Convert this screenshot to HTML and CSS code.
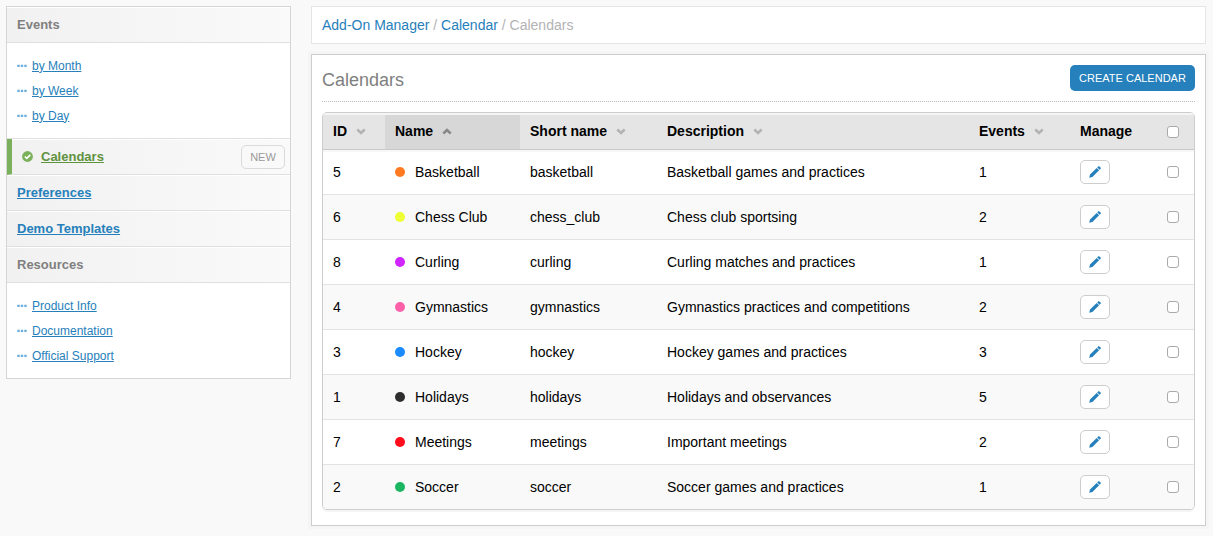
FILE: index.html
```html
<!DOCTYPE html>
<html lang="en">
<head>
<meta charset="utf-8">
<title>Calendars</title>
<link rel="stylesheet" href="styles.css">
</head>
<body>
<svg class="defs" aria-hidden="true">
  <symbol id="down" viewBox="0 0 10 7"><path d="M1.3 1.5 5 4.9 8.7 1.5" fill="none" stroke="currentColor" stroke-width="2.6"/></symbol>
  <symbol id="up" viewBox="0 0 10 7"><path d="M1.3 5.5 5 2.1 8.7 5.5" fill="none" stroke="currentColor" stroke-width="2.6"/></symbol>
  <symbol id="pencil" viewBox="0 0 12 12"><path d="M.2 11.8 1 8.6 7.7 1.9 10.1 4.3 3.4 11z M8.2 1.4 9.2.4q.6-.6 1.2 0l1.2 1.2q.6.6 0 1.2l-1 1z" fill="currentColor"/></symbol>
  <symbol id="dots" viewBox="0 0 10 4"><path d="M.3 .7h2.4v2.4H.3z M3.8 .7h2.4v2.4H3.8z M7.3 .7h2.4v2.4H7.3z" fill="currentColor"/></symbol>
</svg>
<div class="page">
  <nav class="sidebar">
    <h2 class="side-head">Events</h2>
    <ul class="side-list">
      <li><svg class="dots"><use href="#dots"/></svg><a href="#">by Month</a></li>
      <li><svg class="dots"><use href="#dots"/></svg><a href="#">by Week</a></li>
      <li><svg class="dots"><use href="#dots"/></svg><a href="#">by Day</a></li>
    </ul>
    <h2 class="side-head active">
      <svg class="check" viewBox="0 0 11 11"><circle cx="5.5" cy="5.5" r="5.4" fill="#7bb15c"/><path d="M2.8 5.5 4.8 7.4 8.3 3.9" fill="none" stroke="#fff" stroke-width="1.6"/></svg>
      <a href="#">Calendars</a><a class="new" href="#">NEW</a>
    </h2>
    <h2 class="side-head"><a href="#">Preferences</a></h2>
    <h2 class="side-head"><a href="#">Demo Templates</a></h2>
    <h2 class="side-head">Resources</h2>
    <ul class="side-list last">
      <li><svg class="dots"><use href="#dots"/></svg><a href="#">Product Info</a></li>
      <li><svg class="dots"><use href="#dots"/></svg><a href="#">Documentation</a></li>
      <li><svg class="dots"><use href="#dots"/></svg><a href="#">Official Support</a></li>
    </ul>
  </nav>
  <main class="main">
    <div class="crumbs"><a href="#">Add-On Manager</a> / <a href="#">Calendar</a> / Calendars</div>
    <section class="panel">
      <header class="panel-head"><h1>Calendars</h1><a class="create" href="#">CREATE CALENDAR</a></header>
      <div class="table">
        <div class="row head">
          <span>ID<svg class="sort"><use href="#down"/></svg></span>
          <span class="sorted">Name<svg class="sort"><use href="#up"/></svg></span>
          <span>Short name<svg class="sort"><use href="#down"/></svg></span>
          <span>Description<svg class="sort"><use href="#down"/></svg></span>
          <span>Events<svg class="sort"><use href="#down"/></svg></span>
          <span>Manage</span>
          <span class="pick"><input type="checkbox" class="box"></span>
        </div>
        <div class="row"><span>5</span><span><i class="dot orange"></i>Basketball</span><span>basketball</span><span>Basketball games and practices</span><span>1</span><span><a class="edit" href="#"><svg class="pencil"><use href="#pencil"/></svg></a></span><span class="pick"><input type="checkbox" class="box"></span></div>
        <div class="row"><span>6</span><span><i class="dot yellow"></i>Chess Club</span><span>chess_club</span><span>Chess club sportsing</span><span>2</span><span><a class="edit" href="#"><svg class="pencil"><use href="#pencil"/></svg></a></span><span class="pick"><input type="checkbox" class="box"></span></div>
        <div class="row"><span>8</span><span><i class="dot purple"></i>Curling</span><span>curling</span><span>Curling matches and practices</span><span>1</span><span><a class="edit" href="#"><svg class="pencil"><use href="#pencil"/></svg></a></span><span class="pick"><input type="checkbox" class="box"></span></div>
        <div class="row"><span>4</span><span><i class="dot pink"></i>Gymnastics</span><span>gymnastics</span><span>Gymnastics practices and competitions</span><span>2</span><span><a class="edit" href="#"><svg class="pencil"><use href="#pencil"/></svg></a></span><span class="pick"><input type="checkbox" class="box"></span></div>
        <div class="row"><span>3</span><span><i class="dot blue"></i>Hockey</span><span>hockey</span><span>Hockey games and practices</span><span>3</span><span><a class="edit" href="#"><svg class="pencil"><use href="#pencil"/></svg></a></span><span class="pick"><input type="checkbox" class="box"></span></div>
        <div class="row"><span>1</span><span><i class="dot black"></i>Holidays</span><span>holidays</span><span>Holidays and observances</span><span>5</span><span><a class="edit" href="#"><svg class="pencil"><use href="#pencil"/></svg></a></span><span class="pick"><input type="checkbox" class="box"></span></div>
        <div class="row"><span>7</span><span><i class="dot red"></i>Meetings</span><span>meetings</span><span>Important meetings</span><span>2</span><span><a class="edit" href="#"><svg class="pencil"><use href="#pencil"/></svg></a></span><span class="pick"><input type="checkbox" class="box"></span></div>
        <div class="row"><span>2</span><span><i class="dot green"></i>Soccer</span><span>soccer</span><span>Soccer games and practices</span><span>1</span><span><a class="edit" href="#"><svg class="pencil"><use href="#pencil"/></svg></a></span><span class="pick"><input type="checkbox" class="box"></span></div>
      </div>
    </section>
  </main>
</div>
</body>
</html>
```

FILE: styles.css
```css
* { box-sizing: border-box; }
body {
  margin: 0;
  height: 536px;
  overflow: hidden;
  background: #f9f9f9;
  font: 14px "Liberation Sans", Arial, sans-serif;
  color: #000;
}
a { color: #2680bb; }
.defs { display: none; }
.page { display: flex; align-items: flex-start; gap: 20px; padding: 6px 7px 0 6px; }

.sidebar { width: 285px; border: 1px solid #d5d5d5; background: #fff; }
.side-head {
  display: flex;
  align-items: center;
  height: 36px;
  margin: 0;
  padding: 0 5px 0 10px;
  border-bottom: 1px solid #dfdfdf;
  box-shadow: inset 0 1px #fff;
  background: linear-gradient(to right, #f1f1f1, #fafafa);
  color: #808080;
  font-size: 13px;
  font-weight: bold;
}
.side-head.active { padding-left: 10px; border-left: 5px solid #7bb15c; }
.active a { color: #5f923f; }
.check { width: 11px; height: 11px; margin-right: 8px; }
.side-head .new {
  margin-left: auto;
  width: 44px;
  height: 24px;
  border: 1px solid #dadada;
  border-radius: 5px;
  color: #999;
  font-size: 11px;
  font-weight: normal;
  line-height: 23px;
  text-align: center;
  text-decoration: none;
}
.side-list {
  list-style: none;
  height: 96px;
  margin: 0;
  padding: 10px 10px 0;
  border-bottom: 1px solid #dfdfdf;
  font-size: 12px;
}
.side-list.last { height: 95px; border: 0; }
.side-list li { display: flex; align-items: center; height: 25px; }
.side-list a, .side-head a { text-underline-offset: 1px; }
.dots { width: 10px; height: 4px; margin-right: 5px; color: #6aaedd; }

.main { flex: 1; }
.crumbs {
  height: 38px;
  margin-bottom: 10px;
  padding-left: 10px;
  border: 1px solid #e5e5e5;
  background: #fff;
  color: #b3b3b3;
  line-height: 37px;
}
.crumbs a { text-decoration: none; }
.panel {
  height: 472px;
  padding: 10px;
  border: 1px solid #cdcdcd;
  box-shadow: 0 0 0 3px #f5f5f5;
  background: #fff;
}
.panel-head {
  display: flex;
  justify-content: space-between;
  height: 37px;
  margin-bottom: 10px;
  border-bottom: 1px dotted #bbb;
}
h1 { margin: 0; color: #808080; font-size: 18px; font-weight: normal; line-height: 30px; }
.create {
  width: 125px;
  height: 26px;
  border-radius: 5px;
  background: #2680bb;
  color: #fff;
  font-size: 11px;
  line-height: 26px;
  text-align: center;
  text-decoration: none;
}

.table {
  overflow: hidden;
  border: 1px solid #cdcdcd;
  border-radius: 5px;
  box-shadow: 0 2px #f5f5f5;
}
.row {
  display: grid;
  grid-template-columns: 62px 135px 137px 312px 101px 82px 42px;
  height: 45px;
  border-bottom: 1px solid #e3e3e3;
}
.row:nth-child(odd) { background: #f9f9f9; }
.row:last-child { height: 44px; border: 0; }
.row > span { display: flex; align-items: center; padding-left: 10px; white-space: nowrap; }
.row.head {
  height: 37px;
  border-top: 2px solid #f5f5f5;
  border-bottom: 1px solid #c8c8c8;
  background: #e5e5e5;
  font-weight: bold;
}
.row.head > span:not(.pick) { padding-bottom: 2px; }
.head + .row { box-shadow: inset 0 2px #f8f8f8; }
.row .sorted { background: #d7d7d7; color: #000; }
.sort { width: 10px; height: 7px; margin: 1px 0 0 9px; color: #b3b3b3; }
.sorted .sort { color: #888; }
.row > .pick { padding-left: 15px; }
.box {
  appearance: none;
  width: 12px;
  height: 12px;
  margin: 0;
  border: 1px solid #aaa;
  border-radius: 3px;
  background: #fff;
}
.dot { width: 10px; height: 10px; margin-right: 10px; border-radius: 50%; }
.orange { background: #ff7a21; }
.yellow { background: #eeff33; }
.purple { background: #cf25ff; }
.pink { background: #ff60aa; }
.blue { background: #1b8cff; }
.black { background: #2e2e2e; }
.red { background: #ff0d1a; }
.green { background: #1cb663; }
.edit {
  display: flex;
  align-items: center;
  justify-content: center;
  width: 30px;
  height: 24px;
  border: 1px solid #cdcdcd;
  border-radius: 5px;
  background: #fff;
}
.pencil { width: 12px; height: 12px; }
```
